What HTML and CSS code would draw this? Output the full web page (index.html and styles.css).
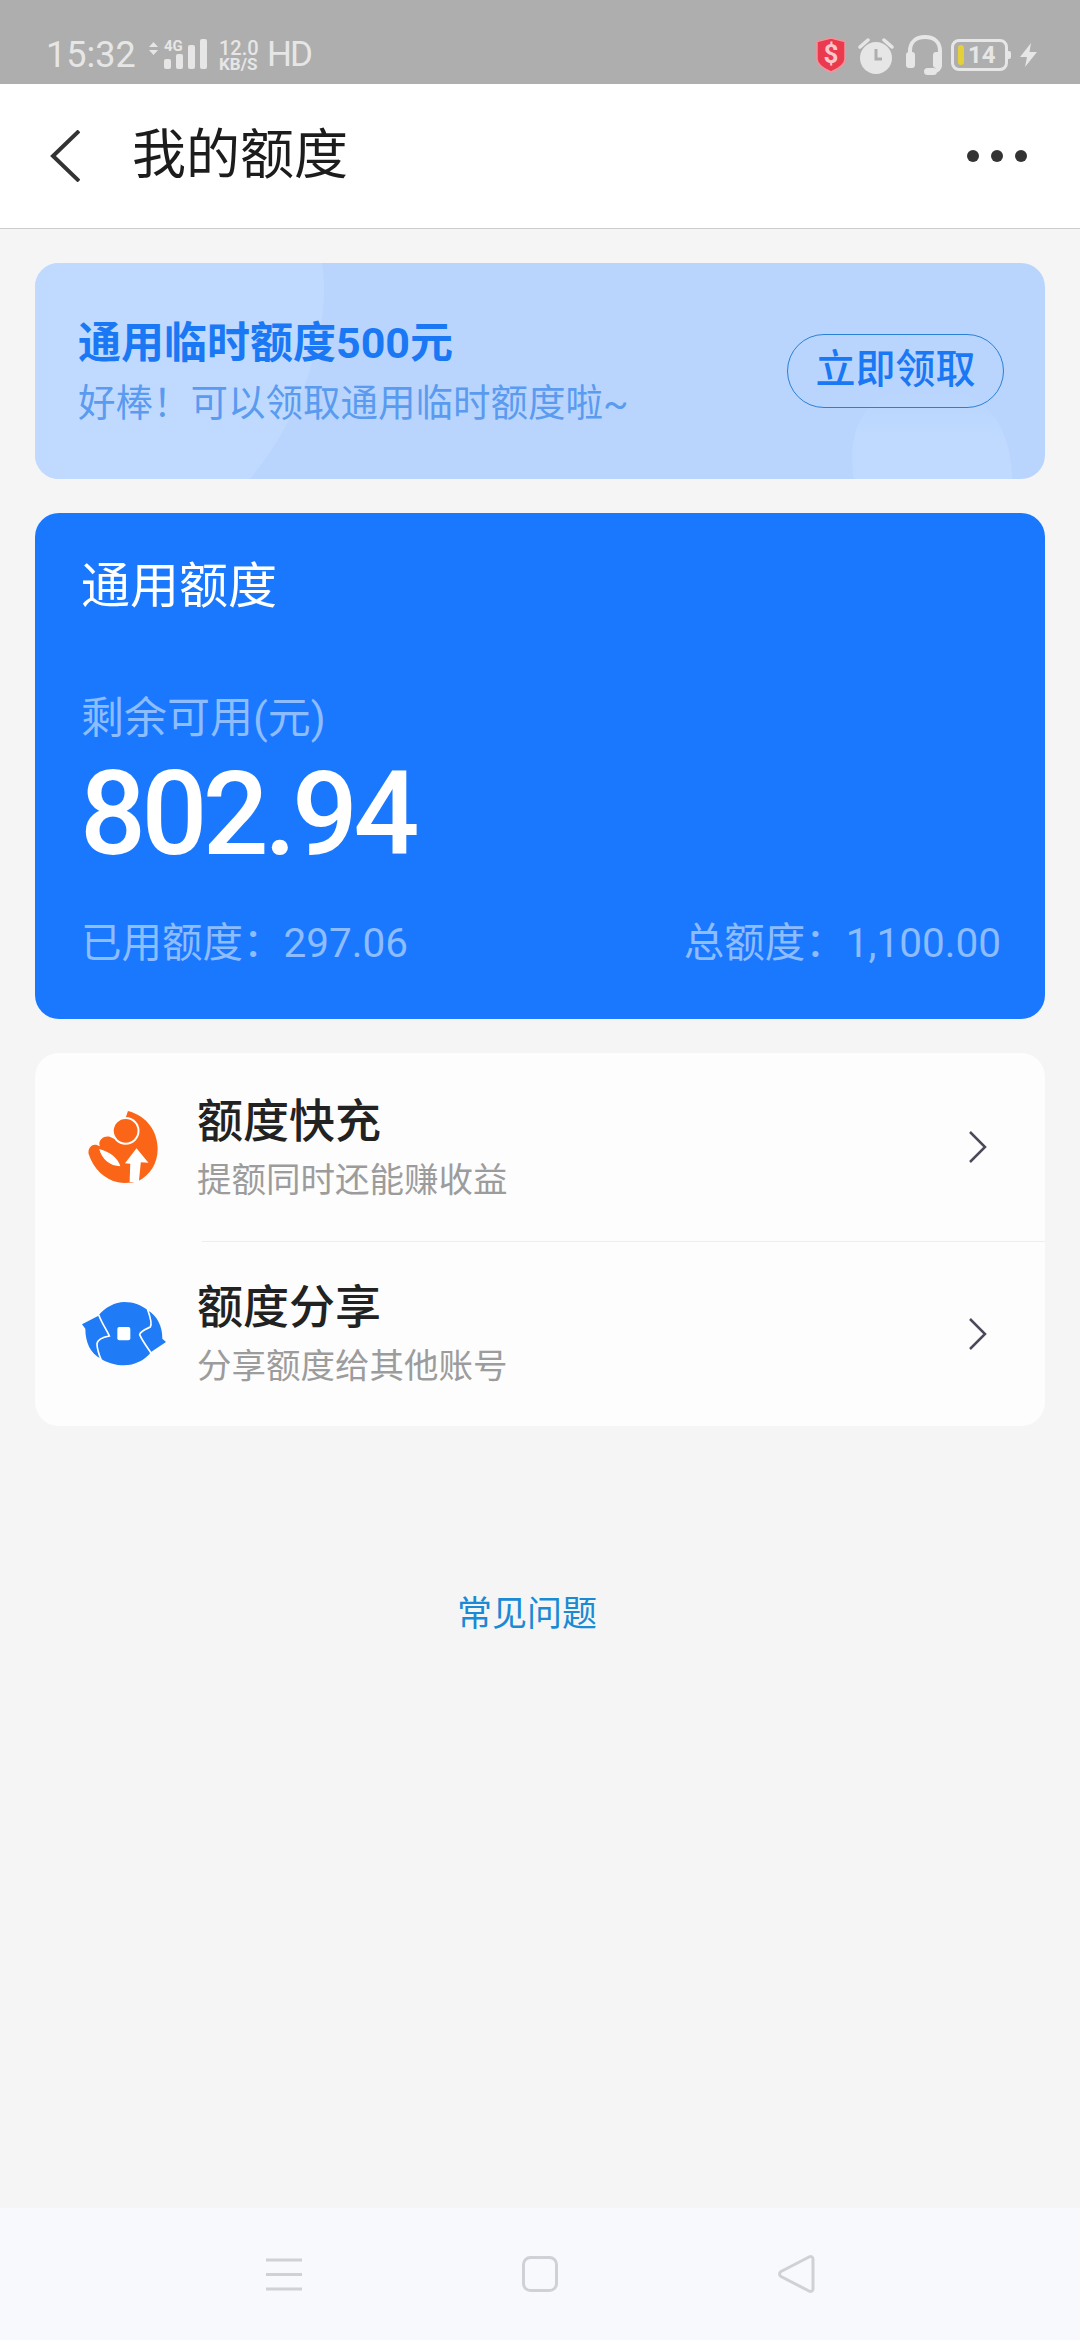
FILE: index.html
```html
<!DOCTYPE html>
<html lang="zh-CN">
<head>
    <meta charset="UTF-8">
    <meta name="viewport" content="width=device-width, initial-scale=1.0">
    <title>我的额度</title>
    <link rel="stylesheet" href="styles.css">
</head>
<body>
<div class="page">

    <!-- Status bar -->
    <div class="status-bar">
        <div class="status-left">
            <span class="clock">15:32</span>
            <svg class="net-arrows" width="9" height="13" viewBox="0 0 9 13"><path d="M4.500 0 9 5H0zM4.500 13 0 8h9z"/></svg>
            <div class="signal">
                <span class="signal-type">4G</span>
                <svg class="signal-bars" width="43" height="30" viewBox="0 0 43 30">
                    <rect x="0" y="20" width="7" height="10" rx="2"/>
                    <rect x="12" y="15" width="7" height="15" rx="2"/>
                    <rect x="24" y="6" width="7" height="24" rx="2"/>
                    <rect x="36" y="0" width="7" height="30" rx="2"/>
                </svg>
            </div>
            <div class="speed">
                <span class="speed-num">12.0</span>
                <span class="speed-unit">KB/S</span>
            </div>
            <span class="hd">HD</span>
        </div>
        <div class="status-right">
            <div class="shield">
                <svg width="30" height="36" viewBox="0 0 30 36"><path d="M15 1 29 4.500V22C29 27 22 32 15 35 8 32 1 27 1 22V4.500Z" fill="#ea3a4e" stroke="#f6929d" stroke-width="1.500"/></svg>
                <span class="shield-sign">$</span>
            </div>
            <svg class="alarm" width="36" height="37" viewBox="0 0 36 37">
                <circle cx="18" cy="21" r="16" fill="#e6e6e6"/>
                <path d="M18 12v10h6" fill="none" stroke="#aeaeae" stroke-width="3"/>
                <path d="M2 10 10 3M34 10 26 3" fill="none" stroke="#e6e6e6" stroke-width="3.500" stroke-linecap="round"/>
            </svg>
            <svg class="headset" width="38" height="42" viewBox="0 0 38 42">
                <path d="M4 22V17C4 8 10 3 19 3S34 8 34 17V30C34 35 31 37 27 37" fill="none" stroke="#e6e6e6" stroke-width="4"/>
                <rect x="0" y="18" width="9" height="16" rx="3" fill="#e6e6e6"/>
                <rect x="27" y="18" width="9" height="16" rx="3" fill="#e6e6e6"/>
                <rect x="18" y="34" width="13" height="7" rx="3.500" fill="#e6e6e6"/>
            </svg>
            <div class="battery">
                <span class="battery-level"></span>
                <span class="battery-num">14</span>
            </div>
            <svg class="bolt" width="17" height="24" viewBox="0 0 17 24"><path d="M11 0 0 14H7L5 24 17 9H9.500Z" fill="#e6e6e6"/></svg>
        </div>
    </div>

    <!-- Title bar -->
    <div class="title-bar">
        <svg class="back" width="30" height="52" viewBox="0 0 30 52"><path d="M29 1 3 26 29 51" fill="none" stroke="#333" stroke-width="4"/></svg>
        <h1>我的额度</h1>
        <div class="more"><i></i><i></i><i></i></div>
    </div>

    <div class="content">

        <!-- Temporary quota banner -->
        <div class="banner">
            <svg class="banner-decor" width="1010" height="216" viewBox="0 0 1010 216">
                <defs>
                    <linearGradient id="fade" x1="0" y1="0" x2="0" y2="1">
                        <stop offset="0" stop-color="#b9d5fd"/>
                        <stop offset="0.6" stop-color="#c0daff"/>
                    </linearGradient>
                </defs>
                <path d="M0 0H287C297 60 270 150 215 216H0Z" fill="#c0daff"/>
                <path d="M819 216C812 170 825 130 880 125 930 122 975 140 977 216Z" fill="url(#fade)"/>
            </svg>
            <div class="banner-text">
                <div class="banner-title">通用临时额度500元</div>
                <div class="banner-sub">好棒！可以领取通用临时额度啦~</div>
            </div>
            <div class="banner-btn">立即领取</div>
        </div>

        <!-- General quota card -->
        <div class="quota-card">
            <div class="quota-title">通用额度</div>
            <div class="quota-label">剩余可用(元)</div>
            <div class="quota-amount">802.94</div>
            <div class="quota-foot">
                <span>已用额度：297.06</span>
                <span>总额度：1,100.00</span>
            </div>
        </div>

        <!-- Quota actions -->
        <div class="action-list">
            <div class="action-row">
                <svg class="icon-boost" width="70" height="72" viewBox="115 125 210 218">
                    <path d="M235 125C295 140 325 190 325 240 325 285 300 320 268 336 250 342 225 345 205 341 165 332 130 300 116 255 112 235 130 218 150 232 143 215 160 198 180 203L205 215Z" fill="#fb6518"/>
                    <circle cx="228" cy="185" r="42" fill="#fff"/>
                    <circle cx="228" cy="185" r="36" fill="#fb6518"/>
                    <path d="M148 240C155 270 180 292 212 292 205 268 180 248 148 240Z" fill="#fff"/>
                    <path d="M261 238 297 282 274 280 268 340 240 340 242 285 226 283Z" fill="#fff"/>
                </svg>
                <div class="action-text">
                    <div class="action-title">额度快充</div>
                    <div class="action-sub">提额同时还能赚收益</div>
                </div>
                <svg class="chevron" width="18" height="32" viewBox="0 0 18 32"><path d="M1 1 16 16 1 31" fill="none" stroke="#4a4a5a" stroke-width="2.500"/></svg>
            </div>
            <div class="action-row">
                <svg class="icon-share" width="85" height="64" viewBox="95 130 255 192">
                    <path d="M143 172C165 145 195 130 222 130 250 130 275 140 292 155 320 170 337 205 336 240L347 250 302 280C285 305 250 320 222 320 195 320 170 312 152 300 120 285 105 250 105 210L95 197Z" fill="#1f7bf6"/>
                    <path d="M145 168C155 195 170 215 177 232 160 235 142 240 140 255 140 270 145 285 152 302" fill="none" stroke="#fff" stroke-width="5"/>
                    <path d="M292 153C300 175 306 195 300 205 285 212 270 218 268 228 275 245 290 265 302 283" fill="none" stroke="#fff" stroke-width="5"/>
                    <rect x="201" y="205" width="39" height="40" rx="6" fill="#fff"/>
                </svg>
                <div class="action-text">
                    <div class="action-title">额度分享</div>
                    <div class="action-sub">分享额度给其他账号</div>
                </div>
                <svg class="chevron" width="18" height="32" viewBox="0 0 18 32"><path d="M1 1 16 16 1 31" fill="none" stroke="#4a4a5a" stroke-width="2.500"/></svg>
            </div>
        </div>

        <div class="faq">常见问题</div>
    </div>

    <!-- System navigation -->
    <div class="sys-nav">
        <svg width="36" height="33" viewBox="0 0 36 33"><path d="M0 2H36M0 16.500H36M0 31H36" stroke="#cfd1d6" stroke-width="3"/></svg>
        <svg width="36" height="36" viewBox="0 0 36 36"><rect x="1.500" y="1.500" width="33" height="33" rx="7" fill="none" stroke="#cfd1d6" stroke-width="3"/></svg>
        <svg width="37" height="40" viewBox="0 0 37 40"><path d="M3 17.500 31 3C33 2 35 3 35 5V35C35 37 33 38 31 37L3 22.500C1 21 1 19 3 17.500Z" fill="none" stroke="#cfd1d6" stroke-width="3"/></svg>
    </div>
</div>
</body>
</html>
```

FILE: styles.css
```css
/* General Styles */
body {
    margin: 0;
    font-family: Roboto, "Noto Sans CJK SC", sans-serif;
    background-color: #f5f5f5;
    color: #222;
}

.page {
    width: 1080px;
    height: 2340px;
    display: flex;
    flex-direction: column;
    overflow: hidden;
}

/* Status bar */
.status-bar {
    height: 84px;
    box-sizing: border-box;
    background-color: #aeaeae;
    color: #e6e6e6;
    display: flex;
    justify-content: space-between;
    align-items: center;
    padding: 26px 43px 0 46px;
}

.status-left, .status-right {
    display: flex;
    align-items: center;
}

.clock {
    font-size: 36px;
    line-height: 42px;
    width: 103px;
}

.net-arrows {
    fill: #e6e6e6;
    margin-bottom: 14px;
}

.signal {
    height: 30px;
    margin-left: 6px;
    margin-bottom: 2px;
    position: relative;
}

.signal-type {
    position: absolute;
    top: 0;
    left: 0;
    font-size: 15px;
    line-height: 15px;
    font-weight: 700;
}

.signal-bars {
    display: block;
    fill: #e6e6e6;
}

.speed {
    display: flex;
    flex-direction: column;
    margin-left: 12px;
    width: 48px;
}

.speed-num {
    font-size: 20px;
    line-height: 18px;
    font-weight: 500;
}

.speed-unit {
    font-size: 17px;
    line-height: 14px;
    font-weight: 700;
}

.hd {
    font-size: 35px;
    line-height: 42px;
    letter-spacing: -2px;
}

.shield {
    position: relative;
    width: 30px;
    height: 36px;
    margin-right: 12px;
}

.shield-sign {
    position: absolute;
    top: 0;
    left: 0;
    width: 30px;
    text-align: center;
    font-size: 26px;
    line-height: 34px;
    font-weight: 700;
    color: #fbc6cb;
}

.alarm {
    margin-right: 12px;
}

.headset {
    margin-right: 7px;
}

.battery {
    width: 57px;
    height: 32px;
    box-sizing: border-box;
    border: 3px solid #e6e6e6;
    border-radius: 8px;
    display: flex;
    align-items: center;
    padding-left: 4px;
    margin-right: 12px;
    position: relative;
}

.battery::after {
    content: "";
    position: absolute;
    right: -6px;
    top: 9px;
    width: 3px;
    height: 8px;
    background-color: #e6e6e6;
    border-radius: 0 2px 2px 0;
}

.battery-level {
    width: 6px;
    height: 20px;
    background-color: #e6d03a;
    border-radius: 3px;
}

.battery-num {
    font-size: 24px;
    line-height: 26px;
    font-weight: 700;
    margin-left: 4px;
}

/* Title bar */
.title-bar {
    height: 145px;
    box-sizing: border-box;
    background-color: #fff;
    border-bottom: 1px solid #ccc;
    display: flex;
    align-items: center;
    padding: 0 53px 0 50px;
}

h1 {
    margin: 0 0 0 52px;
    font-size: 54px;
    line-height: 70px;
    font-weight: 400;
    color: #1c1c1c;
    flex: 1;
}

.more {
    display: flex;
    gap: 12px;
}

.more i {
    width: 12px;
    height: 12px;
    border-radius: 50%;
    background-color: #333;
}

/* Content */
.content {
    flex: 1;
    padding: 34px 35px 0;
    display: flex;
    flex-direction: column;
    gap: 34px;
}

.banner {
    height: 216px;
    box-sizing: border-box;
    background-color: #b9d5fd;
    border-radius: 24px;
    display: flex;
    justify-content: space-between;
    align-items: center;
    padding: 0 41px 0 43px;
    position: relative;
    overflow: hidden;
}

.banner-decor {
    position: absolute;
    top: 0;
    left: 0;
}

.banner-text, .banner-btn {
    position: relative;
}

.banner-title {
    font-size: 43px;
    line-height: 56px;
    font-weight: 700;
    color: #1a78f5;
}

.banner-sub {
    font-size: 37.5px;
    line-height: 50px;
    margin-top: 7px;
    color: #5a9bf0;
}

.banner-btn {
    width: 217px;
    height: 74px;
    box-sizing: border-box;
    border: 1px solid #2a80d4;
    border-radius: 37px;
    font-size: 40px;
    line-height: 70px;
    font-weight: 500;
    text-align: center;
    color: #1a78f5;
}

.quota-card {
    height: 506px;
    box-sizing: border-box;
    background-color: #1a78ff;
    border-radius: 24px;
    padding: 44px 44px 0 46px;
    color: #fff;
}

.quota-title {
    font-size: 49px;
    line-height: 60px;
}

.quota-label {
    margin-top: 76px;
    font-size: 43px;
    line-height: 50px;
    color: #8dbcff;
}

.quota-amount {
    margin-top: 11px;
    margin-left: -1px;
    font-size: 116px;
    line-height: 120px;
    font-weight: 500;
    letter-spacing: -4.500px;
}

.quota-foot {
    margin-top: 44px;
    display: flex;
    justify-content: space-between;
    font-size: 40.5px;
    line-height: 50px;
    color: #8dbcff;
}

/* Action list */
.action-list {
    background-color: #fdfdfd;
    border-radius: 24px;
    overflow: hidden;
}

.action-row {
    height: 188px;
    display: flex;
    align-items: center;
    padding: 0 58px 0 47px;
    position: relative;
}

.action-row + .action-row {
    height: 185px;
}

/* Divider starts under the text, not under the icon */
.action-row + .action-row::before {
    content: "";
    position: absolute;
    top: 0;
    left: 167px;
    right: 0;
    height: 1px;
    background-color: #eee;
}

.icon-boost {
    flex: none;
    margin: 0 9px 0 6px;
}

.icon-share {
    flex: none;
}

.action-text {
    flex: 1;
    margin-left: 30px;
}

.action-title {
    font-size: 46px;
    line-height: 62px;
    font-weight: 500;
    color: #222;
}

.action-sub {
    margin-top: 3px;
    font-size: 34.5px;
    line-height: 50px;
    color: #9c9c9c;
}

.faq {
    margin-top: 130px;
    margin-right: 26px;
    text-align: center;
    font-size: 35px;
    line-height: 50px;
    color: #1a8ad4;
}

/* System navigation */
.sys-nav {
    height: 132px;
    background-color: #f8f9fd;
    display: flex;
    justify-content: center;
    align-items: center;
    gap: 220px;
}
```
